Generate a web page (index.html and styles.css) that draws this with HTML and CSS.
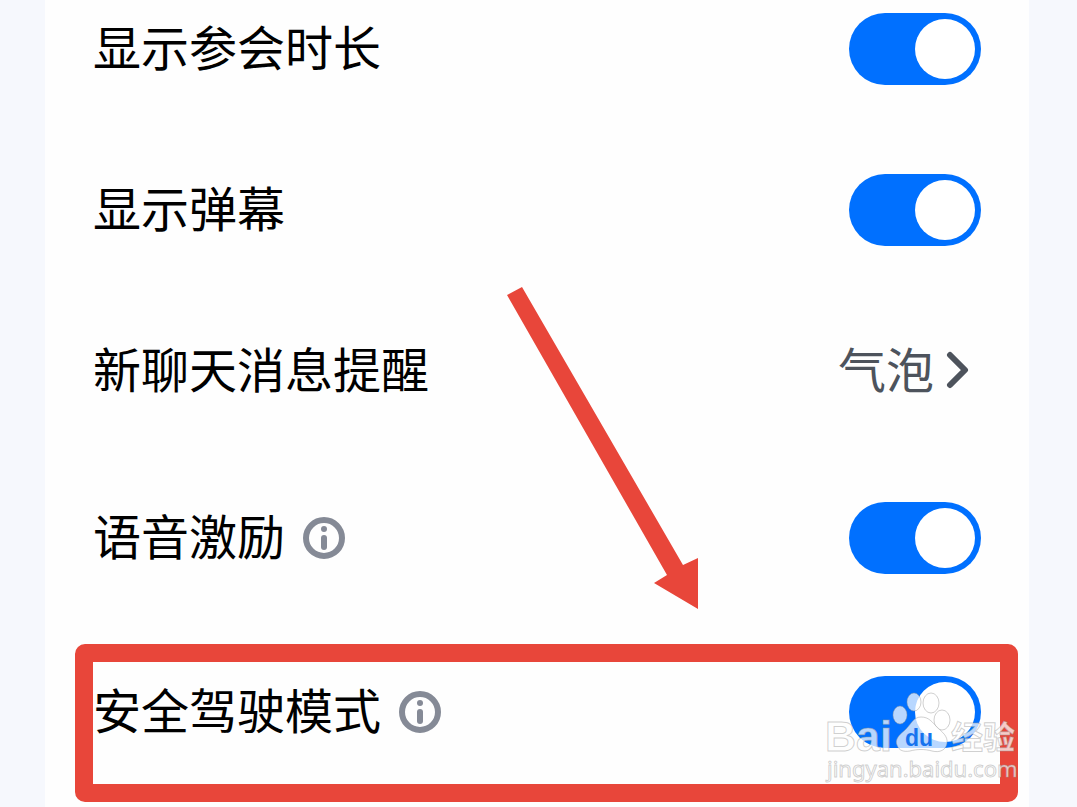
FILE: index.html
```html
<!DOCTYPE html>
<html lang="zh-CN">
<head>
    <meta charset="UTF-8">
    <meta name="viewport" content="width=device-width, initial-scale=1.0">
    <title>会议设置</title>
    <link rel="stylesheet" href="styles.css">
</head>
<body>
    <main class="panel">
        <div class="row">
            <label class="name" for="duration">显示参会时长</label>
            <input type="checkbox" class="switch" id="duration" checked>
        </div>
        <div class="row">
            <label class="name" for="danmu">显示弹幕</label>
            <input type="checkbox" class="switch" id="danmu" checked>
        </div>
        <div class="row group-end">
            <span class="name">新聊天消息提醒</span>
            <a href="#" class="value">
                <span class="name">气泡</span>
                <svg class="chevron" width="24" height="40" viewBox="0 0 24 40">
                    <path d="M4 4 L19 19 L4 34"/>
                </svg>
            </a>
        </div>
        <div class="row with-info">
            <label class="name" for="voice">语音激励</label>
            <svg class="info" width="42" height="42" viewBox="0 0 42 42">
                <circle class="ring" cx="21" cy="21" r="18"/>
                <circle cx="21" cy="12" r="3"/>
                <rect x="18" y="18" width="6" height="15" rx="3"/>
            </svg>
            <input type="checkbox" class="switch" id="voice" checked>
        </div>
        <div class="row marked">
            <label class="name" for="driving">安全驾驶模式</label>
            <svg class="info" width="42" height="42" viewBox="0 0 42 42">
                <circle class="ring" cx="21" cy="21" r="18"/>
                <circle cx="21" cy="12" r="3"/>
                <rect x="18" y="18" width="6" height="15" rx="3"/>
            </svg>
            <input type="checkbox" class="switch" id="driving" checked>
            <div class="frame"></div>
            <svg class="watermark" width="200" height="100" viewBox="0 0 200 100">
                <g class="paw">
                    <ellipse cx="78" cy="27" rx="7" ry="9"/>
                    <ellipse cx="92" cy="14" rx="7" ry="9"/>
                    <ellipse cx="109" cy="15" rx="8" ry="10"/>
                    <ellipse cx="120" cy="32" rx="8" ry="10"/>
                    <path d="M99 29 C91 29 89 37 82 43 C76 48 73 52 75 57 C77 63 82 64 88 63 C95 61 103 61 110 63 C118 65 124 62 125 55 C126 48 120 44 115 39 C110 34 107 29 99 29 Z"/>
                </g>
                <text class="brand" x="3" y="63">Bai</text>
                <text class="du" x="83" y="58">du</text>
                <text class="cjk" x="129" y="61">经验</text>
                <text class="url" x="5" y="89">jingyan.baidu.com</text>
            </svg>
        </div>
        <svg class="arrow" width="192" height="323" viewBox="0 0 192 323">
            <polygon points="0,8 15,0 176,278 191,271 191,322 147,296 160,288"/>
        </svg>
    </main>
</body>
</html>
```
FILE: styles.css
```css
* {
    box-sizing: border-box;
}
body {
    margin: 0;
    padding: 0 48px 0 45px;
    background-color: #f6f8fd;
    font-family: "Noto Sans CJK SC", sans-serif;
    font-size: 48px;
    line-height: 64px;
    color: #000;
}
.panel {
    position: relative;
    min-height: 100vh;
    padding: 13px 48px 0 48px;
    background-color: #fefefe;
}
.row {
    position: relative;
    display: flex;
    align-items: center;
    height: 72px;
    margin-bottom: 89px;
}
.name {
    padding-bottom: 8px;
}
.group-end {
    margin-bottom: 95px;
}
.with-info {
    margin-bottom: 102px;
}
.marked {
    margin-bottom: 0;
}
.switch {
    appearance: none;
    width: 132px;
    height: 72px;
    margin: 0 0 0 auto;
    padding: 6px;
    border-radius: 36px;
    background-color: #ccc;
}
.switch::before {
    content: "";
    display: block;
    width: 60px;
    height: 60px;
    border-radius: 50%;
    background-color: #fff;
}
.switch:checked {
    background-color: #0070ff;
}
.switch:checked::before {
    margin-left: auto;
}
.value {
    display: flex;
    align-items: center;
    gap: 12px;
    margin-left: auto;
    padding-right: 11px;
    color: #4d535c;
    text-decoration: none;
}
.chevron path {
    fill: none;
    stroke: #4d535c;
    stroke-width: 6;
    stroke-linecap: round;
    stroke-linejoin: round;
}
.info {
    margin-left: 18px;
    fill: #858a96;
}
.info .ring {
    fill: none;
    stroke: #858a96;
    stroke-width: 6;
}
.frame {
    position: absolute;
    top: -32px;
    right: -37px;
    left: -18px;
    height: 158px;
    border: 18px solid #e8463a;
    border-radius: 10px;
    pointer-events: none;
}
.arrow {
    position: absolute;
    top: 287px;
    left: 462px;
    fill: #e8463a;
    pointer-events: none;
}
.watermark {
    position: absolute;
    top: 12px;
    right: -41px;
    fill: rgba(255, 255, 255, 0.72);
    stroke: rgba(150, 150, 150, 0.45);
    stroke-width: 1;
    pointer-events: none;
}
.watermark .brand {
    font: bold 43px "Liberation Sans", sans-serif;
}
.watermark .du {
    font: bold 23px "Liberation Sans", sans-serif;
    fill: #1673ee;
    stroke: none;
}
.watermark .cjk {
    font: bold 32px "Noto Sans CJK SC", sans-serif;
}
.watermark .url {
    font: 22px "Noto Sans", sans-serif;
}
```
